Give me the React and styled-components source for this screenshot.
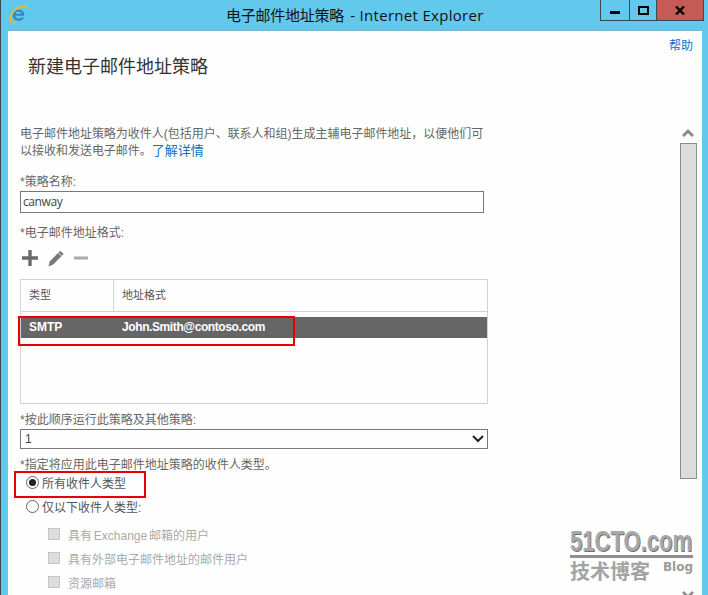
import React from 'react';
import styled, { createGlobalStyle } from 'styled-components';

const Global = createGlobalStyle`
  html, body { margin: 0; padding: 0; background: #62c9ec; }
  body { font-family: "Liberation Sans", "Noto Sans CJK SC", sans-serif; }
`;

const Window = styled.div`
  position: relative;
  width: 708px;
  height: 595px;
  overflow: hidden;
  background: #62c9ec;
  border-left: 1px solid #3a4a52;
  box-sizing: border-box;
  display: flex;
  flex-direction: column;
`;

const TitleBar = styled.div`
  flex: 0 0 30px;
  height: 30px;
  display: grid;
  grid-template-columns: 1fr auto;
  padding-left: 8px;
  position: relative;
`;

const Brand = styled.div`
  display: flex;
  align-items: flex-start;
  padding-top: 5px;
`;

const TitleText = styled.div`
  position: absolute;
  left: 225px;
  top: 5px;
  font-family: "Open Sans", "Noto Sans CJK SC", sans-serif;
  font-size: 15px;
  line-height: 20px;
  color: #111;
  white-space: nowrap;
`;

const TitleCn = styled.span`
  letter-spacing: -0.25px;
`;

const TitleEn = styled.span`
  margin-left: 2px;
  letter-spacing: 0.3px;
`;

const Controls = styled.div`
  display: flex;
  height: 20px;
  margin-right: 4px;
  border: 1px solid #3a4a52;
  border-top: 0;
`;

const Control = styled.div`
  width: ${p => p.$w}px;
  display: flex;
  align-items: center;
  justify-content: center;
  background: ${p => p.$close ? '#c45c55' : 'transparent'};
  border-left: ${p => p.$first ? '0' : '1px solid #3a4a52'};
`;

const Body = styled.div`
  flex: 1;
  margin: 0 6px 0 7px;
  background: #fdfefd;
  border-top: 1px solid #7db4c9;
  display: flex;
  flex-direction: column;
  min-height: 0;
  color: #666;
  font-size: 12px;
`;

const HelpRow = styled.div`
  display: flex;
  justify-content: flex-end;
  padding: 9px 9px 0 0;
  height: 15px;
`;

const BlueLink = styled.a`
  color: #0a72c4;
  font-size: ${p => p.$size || 12}px;
  line-height: 1;
`;

const Heading = styled.h1`
  margin: 0;
  padding: 0 0 0 20px;
  font-size: 18px;
  line-height: 24px;
  font-weight: 400;
  color: #333;
`;

const Columns = styled.div`
  flex: 1;
  min-height: 0;
  display: grid;
  grid-template-columns: 1fr 20px;
  margin-top: 44px;
  padding-right: 4px;
`;

const Form = styled.div`
  padding: 3px 0 0 12px;
  width: 468px;
  display: flex;
  flex-direction: column;
  align-items: flex-start;
`;

const Intro = styled.p`
  margin: 0;
  width: 480px;
  height: 35px;
  line-height: 17px;
  color: #666;
  white-space: nowrap;
  letter-spacing: -0.02px;
`;

const Label = styled.div`
  margin-top: ${p => p.$top}px;
  line-height: 15px;
  color: #666;
  white-space: nowrap;
`;

const TextInput = styled.div`
  box-sizing: border-box;
  width: 464px;
  height: 22px;
  margin-top: 1px;
  border: 1px solid #777;
  padding: 0 2px;
  line-height: 20px;
  font-size: 12px;
  letter-spacing: -0.4px;
  color: #444;
  font-family: "Open Sans", "Liberation Sans", sans-serif;
`;

const IconBar = styled.div`
  display: flex;
  align-items: center;
  gap: 10px;
  height: 20px;
  margin-top: 7px;
  padding-left: 2px;
`;

const Table = styled.div`
  box-sizing: border-box;
  width: 468px;
  height: 125px;
  margin-top: 11px;
  border: 1px solid #cfd3d3;
`;

const HeadRow = styled.div`
  display: grid;
  grid-template-columns: 92px 1fr;
  height: 31px;
  border-bottom: 1px solid #cfd3d3;
`;

const HeadCell = styled.div`
  padding-left: 8px;
  line-height: 30px;
  font-size: 11px;
  color: #555;
  border-left: ${p => p.$divider ? '1px solid #cfd3d3' : '0'};
`;

const DataRow = styled.div`
  display: grid;
  grid-template-columns: 92px 1fr;
  height: 21px;
  margin-top: 5px;
  background: #666;
  color: #fff;
  font-weight: 700;
  font-size: 12px;
  line-height: 21px;
`;

const DataCell = styled.div`
  padding-left: ${p => p.$pad}px;
  letter-spacing: ${p => p.$tight ? '-0.4px' : '0'};
`;

const SelectBox = styled.div`
  box-sizing: border-box;
  width: 468px;
  height: 20px;
  margin-top: 1px;
  border: 1px solid #777;
  padding: 0 3px 0 4px;
  display: flex;
  align-items: center;
  justify-content: space-between;
  font-size: 12px;
  color: #444;
`;

const RadioRow = styled.div`
  display: flex;
  align-items: center;
  gap: 3px;
  height: ${p => p.$h || 24}px;
  margin-left: 6px;
  margin-top: ${p => p.$top || 0}px;
  color: #555;
  white-space: nowrap;
`;

const Radio = styled.span`
  box-sizing: border-box;
  width: 13px;
  height: 13px;
  border-radius: 50%;
  border: 1px solid #666;
  background: #fff;
  display: flex;
  align-items: center;
  justify-content: center;
  &::after {
    content: '';
    width: 7px;
    height: 7px;
    border-radius: 50%;
    background: ${p => p.$on ? '#222' : 'transparent'};
  }
`;

const CheckRow = styled.div`
  display: flex;
  align-items: center;
  gap: 8px;
  height: 24px;
  margin-left: 28px;
  margin-top: ${p => p.$top || 0}px;
  color: #aaa;
  white-space: nowrap;
  word-spacing: -1.5px;
`;

const CheckBox = styled.span`
  box-sizing: border-box;
  width: 12px;
  height: 12px;
  border: 1px solid #c4c4c4;
  background: #dedede;
`;

const Scroll = styled.div`
  display: flex;
  flex-direction: column;
  align-items: center;
  padding-top: 4px;
`;

const ScrollThumb = styled.div`
  box-sizing: border-box;
  width: 17px;
  height: 336px;
  margin-top: 6px;
  background: #dcdcdc;
  border: 1px solid #8c8c8c;
`;

const ScrollDown = styled.div`
  margin-top: 109px;
`;

const RedBox = styled.div`
  position: absolute;
  left: ${p => p.$x}px;
  top: ${p => p.$y}px;
  width: ${p => p.$w}px;
  height: ${p => p.$h}px;
  box-sizing: border-box;
  border: 2px solid #e60000;
`;

const Watermark = styled.div`
  position: absolute;
  left: 569px;
  top: 529px;
  width: 123px;
  color: #9a9a9a;
`;

const WatermarkLogo = styled.div`
  font-family: "Liberation Sans", sans-serif;
  font-weight: 700;
  font-size: 29px;
  line-height: 25px;
  height: 25px;
  transform: scaleX(0.76);
  transform-origin: left top;
  color: #a8a8a8;
  text-shadow: 1px 1px 0 #6f6f6f;
  white-space: nowrap;
`;

const WatermarkRule = styled.div`
  height: 3px;
  background: #8f8f8f;
  margin-top: 1px;
`;

const WatermarkFoot = styled.div`
  display: flex;
  justify-content: space-between;
  align-items: flex-start;
  margin-top: 3px;
`;

const WatermarkCn = styled.span`
  font-size: 20px;
  line-height: 22px;
  font-weight: 700;
  color: #a3a3a3;
`;

const WatermarkBlog = styled.span`
  font-family: "DejaVu Sans", sans-serif;
  font-size: 12px;
  line-height: 12px;
  font-weight: 700;
  color: #9a9a9a;
`;

const Chevron = ({ up, color = '#8a8a8a', w = 12, h = 8, sw = 2.6 }) => (
  <svg width={w} height={h} viewBox={`0 0 12 ${h}`}>
    <path d={up ? `M1 ${h - 1} L6 ${h - 6} L11 ${h - 1}` : 'M1 1 L6 6 L11 1'} fill="none" stroke={color} strokeWidth={sw} />
  </svg>
);

const IeLogo = () => (
  <svg width="18" height="18" viewBox="0 0 18 18">
    <path d="M4.5 10.8 H15.2 C15.6 6.6 12.8 4.4 9.8 4.4 C6.2 4.4 3.6 7.2 3.6 10.3 C3.6 13.6 6.2 15.8 9.4 15.8 C12 15.8 14 14.5 15 12.4 H11.8 C11.2 13.2 10.4 13.6 9.4 13.6 C7.8 13.6 6.6 12.6 6.4 10.8 M6.5 8.8 C6.8 7.4 8.1 6.5 9.6 6.5 C11.1 6.5 12.2 7.4 12.4 8.8 Z" fill="#2f88cc" fillRule="evenodd" />
    <path d="M2 16.5 C-0.5 11 6 2.5 14.5 1.2 C16.4 0.9 17.2 1.8 16.6 3.4" fill="none" stroke="#eebc1e" strokeWidth="1.7" />
    <path d="M1.5 16.6 C3.5 17.6 6 17.2 8 16.4" fill="none" stroke="#eebc1e" strokeWidth="1" />
  </svg>
);

const PlusIcon = () => (
  <svg width="16" height="16" viewBox="0 0 16 16">
    <path d="M8 0 V16 M0 8 H16" stroke="#6a6a6a" strokeWidth="3.4" fill="none" />
  </svg>
);

const PencilIcon = () => (
  <svg width="16" height="17" viewBox="0 0 16 17">
    <path d="M12.2 0.8 L15.6 4 L5.2 14.4 L0.4 16.4 L1.9 11.2 Z" fill="#787878" />
    <path d="M10.4 2.8 L13.7 6" stroke="#fff" strokeWidth="0.9" />
  </svg>
);

const MinusIcon = () => (
  <svg width="14" height="16" viewBox="0 0 14 16">
    <path d="M0 8 H14" stroke="#a3adb2" strokeWidth="3" />
  </svg>
);

export default function App() {
  return (
    <>
      <Global />
      <Window>
        <TitleBar>
          <Brand><IeLogo /></Brand>
          <TitleText>
            <TitleCn>电子邮件地址策略</TitleCn>
            <TitleEn> - Internet Explorer</TitleEn>
          </TitleText>
          <Controls>
            <Control $w={28} $first>
              <svg width="10" height="10" viewBox="0 0 10 10"><rect x="0" y="6" width="10" height="3" fill="#000" /></svg>
            </Control>
            <Control $w={26}>
              <svg width="11" height="9" viewBox="0 0 11 9"><rect x="1" y="1" width="9" height="7" fill="none" stroke="#000" strokeWidth="2" /></svg>
            </Control>
            <Control $w={46} $close>
              <svg width="10" height="9" viewBox="0 0 10 9"><path d="M1 0.5 L9 8.5 M9 0.5 L1 8.5" stroke="#000" strokeWidth="2.4" /></svg>
            </Control>
          </Controls>
        </TitleBar>
        <Body>
          <HelpRow><BlueLink>帮助</BlueLink></HelpRow>
          <Heading>新建电子邮件地址策略</Heading>
          <Columns>
            <Form>
              <Intro>
                电子邮件地址策略为收件人(包括用户、联系人和组)生成主辅电子邮件地址，以便他们可<br />
                以接收和发送电子邮件。<BlueLink $size={13}>了解详情</BlueLink>
              </Intro>
              <Label $top={14}>*策略名称:</Label>
              <TextInput>canway</TextInput>
              <Label $top={13}>*电子邮件地址格式:</Label>
              <IconBar>
                <PlusIcon />
                <PencilIcon />
                <MinusIcon />
              </IconBar>
              <Table>
                <HeadRow>
                  <HeadCell>类型</HeadCell>
                  <HeadCell $divider>地址格式</HeadCell>
                </HeadRow>
                <DataRow>
                  <DataCell $pad={8}>SMTP</DataCell>
                  <DataCell $pad={9} $tight>John.Smith@contoso.com</DataCell>
                </DataRow>
              </Table>
              <Label $top={9}>*按此顺序运行此策略及其他策略:</Label>
              <SelectBox>
                <span>1</span>
                <Chevron color="#222" w={12} h={8} sw={2} />
              </SelectBox>
              <Label $top={9}>*指定将应用此电子邮件地址策略的收件人类型。</Label>
              <RadioRow $h={18}><Radio $on />所有收件人类型</RadioRow>
              <RadioRow $top={3}><Radio />仅以下收件人类型:</RadioRow>
              <CheckRow $top={4}><CheckBox />具有 Exchange 邮箱的用户</CheckRow>
              <CheckRow><CheckBox />具有外部电子邮件地址的邮件用户</CheckRow>
              <CheckRow><CheckBox />资源邮箱</CheckRow>
            </Form>
            <Scroll>
              <Chevron up h={10} sw={3} />
              <ScrollThumb />
              <ScrollDown><Chevron /></ScrollDown>
            </Scroll>
          </Columns>
        </Body>
        <RedBox $x={17} $y={316} $w={277} $h={30} />
        <RedBox $x={13} $y={471} $w={132} $h={27} />
        <Watermark>
          <WatermarkLogo>51CTO.com</WatermarkLogo>
          <WatermarkRule />
          <WatermarkFoot>
            <WatermarkCn>技术博客</WatermarkCn>
            <WatermarkBlog>Blog</WatermarkBlog>
          </WatermarkFoot>
        </Watermark>
      </Window>
    </>
  );
}
